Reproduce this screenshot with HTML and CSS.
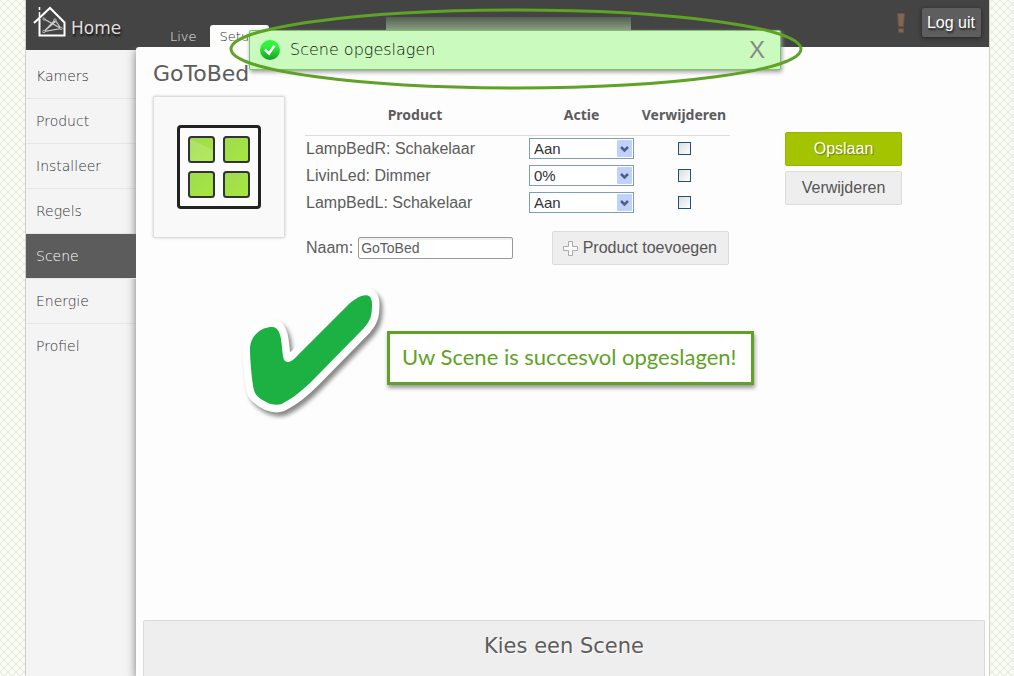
FILE: index.html
```
<!DOCTYPE html>
<html lang="nl">
<head>
<meta charset="utf-8">
<title>Scene - GoToBed</title>
<link rel="stylesheet" href="styles.css">
</head>
<body>
<div class="page">
  <header class="topbar">
    <a class="brand" href="#">
      <svg class="brand-icon" width="34" height="32" viewBox="0 0 34 32" fill="none" stroke="#fff" aria-hidden="true">
        <path d="M1 17 17 2 32 17M6.500 13V29.500H31.500V15.500" stroke-width="2"/>
        <path d="M6.500 1V4M6.500 6V11" stroke-width="1.500"/>
        <path d="M11 13 28 22.500 11 25.500 22 14 28 22.500M11 25.500 23 15" stroke="#ccc" stroke-width="1.200"/>
        <g fill="#444" stroke="#ccc" stroke-width=".8"><circle cx="11" cy="13" r="1.200"/><circle cx="22" cy="14" r="1.200"/><circle cx="11" cy="25.500" r="1.200"/><circle cx="28" cy="22.500" r="1.200"/></g>
      </svg>
      <span>Home</span>
    </a>
    <nav class="tabs">
      <a class="tab" href="#">Live</a>
      <a class="tab tab-active" href="#">Setup</a>
    </nav>
    <div class="session">
      <svg width="8" height="20" viewBox="0 0 8 20" fill="#806656" stroke="#6c503f" role="img" aria-label="Waarschuwing"><path d="M.5.5H7.500L6.500 13.500H1.500ZM1.500 15.500H6.500V19.500H1.500Z"/></svg>
      <button class="logout" type="button">Log uit</button>
    </div>
    <div class="status-glow"></div>
  </header>

  <div class="body">
    <nav class="sidebar">
      <a href="#">Kamers</a>
      <a href="#">Product</a>
      <a href="#">Installeer</a>
      <a href="#">Regels</a>
      <a class="current" href="#">Scene</a>
      <a href="#">Energie</a>
      <a class="last" href="#">Profiel</a>
    </nav>

    <main class="content">
      <h1>GoToBed</h1>
      <div class="editor">
        <div class="scene-card">
          <svg width="84" height="84" viewBox="0 0 84 84" aria-hidden="true">
            <defs><linearGradient id="leaf" x2="1" y2="1"><stop offset="0" stop-color="#a0da55"/><stop offset="1" stop-color="#a5e83a"/></linearGradient></defs>
            <rect x="1.500" y="1.500" width="81" height="81" rx="2.500" fill="#fbfbfb" stroke="#222" stroke-width="3"/>
            <g fill="url(#leaf)" stroke="#333" stroke-width="2">
              <rect x="12" y="12" width="25" height="25" rx="2.500"/><rect x="47" y="12" width="25" height="25" rx="2.500"/>
              <rect x="12" y="47" width="25" height="25" rx="2.500"/><rect x="47" y="47" width="25" height="25" rx="2.500"/>
            </g>
            <path d="M13.500 14 36 25V36H13.500Z" fill="#fff" opacity=".15"/>
          </svg>
        </div>

        <form class="scene-form">
          <table class="products">
            <thead><tr><th>Product</th><th class="col-action">Actie</th><th class="col-remove">Verwijderen</th></tr></thead>
            <tbody>
              <tr><td>LampBedR: Schakelaar</td><td class="mid"><select aria-label="Actie LampBedR"><option>Aan</option><option>Uit</option></select></td><td class="mid"><input type="checkbox" aria-label="Verwijder LampBedR"></td></tr>
              <tr><td>LivinLed: Dimmer</td><td class="mid"><select aria-label="Actie LivinLed"><option>0%</option><option>100%</option></select></td><td class="mid"><input type="checkbox" aria-label="Verwijder LivinLed"></td></tr>
              <tr><td>LampBedL: Schakelaar</td><td class="mid"><select aria-label="Actie LampBedL"><option>Aan</option><option>Uit</option></select></td><td class="mid"><input type="checkbox" aria-label="Verwijder LampBedL"></td></tr>
            </tbody>
          </table>
          <div class="name-row">
            <label for="naam">Naam:</label>
            <input class="name" id="naam" type="text" value="GoToBed">
            <button class="btn add" type="button">
              <svg width="15" height="15" viewBox="0 0 15 15" fill="#fafafa" stroke="#aaa" aria-hidden="true"><path d="M5.500.5H9.500V5.500H14.500V9.500H9.500V14.500H5.500V9.500H.5V5.500H5.500Z"/></svg>
              <span>Product toevoegen</span>
            </button>
          </div>
        </form>

        <div class="actions">
          <button class="btn save" type="button">Opslaan</button>
          <button class="btn" type="button">Verwijderen</button>
        </div>
      </div>

      <div class="result">
        <svg class="result-check" width="144" height="140" viewBox="0 0 144 140" aria-hidden="true">
          <path d="M7 58C7 45 18 36 29 36C42 36 37 65 42 70C47 73 51 68 55 64L104 15C114 5 129 -2 129 13C129 24 128 29 121 37L70 89C60 99 50 107 42 111C37 115 30 114 25 112C19 109 12 105 11 99C9 91 7 69 7 58Z" fill="#1cb142" stroke="#fff" stroke-width="15" stroke-linejoin="round" paint-order="stroke"/>
        </svg>
        <p class="result-text">Uw Scene is succesvol opgeslagen!</p>
      </div>

      <section class="picker"><h2>Kies een Scene</h2></section>
    </main>
  </div>

  <div class="alert" role="status">
    <svg width="20" height="20" viewBox="0 0 20 20" aria-hidden="true">
      <defs><linearGradient id="ok" x2="0" y2="1"><stop offset=".3" stop-color="#2df53a"/><stop offset="1" stop-color="#179c26"/></linearGradient></defs>
      <circle cx="10" cy="10" r="10" fill="url(#ok)"/><path d="M5 9.500 9 13.500 14.500 5.500" fill="none" stroke="#fff" stroke-width="2.500"/>
    </svg>
    <span class="alert-text">Scene opgeslagen</span>
    <button class="close" type="button" aria-label="Sluiten">X</button>
  </div>
  <svg class="ring" width="574" height="82" viewBox="0 0 574 82" aria-hidden="true"><ellipse cx="287" cy="41" rx="285" ry="39" fill="none" stroke="#5fa226" stroke-width="3"/></svg>
</div>
</body>
</html>
```
FILE: styles.css
```
* { box-sizing: border-box; }

body {
  margin: 0;
  color: #5c5c5c;
  font: 16px/20px "Liberation Sans", sans-serif;
  background: #f9fbf3 url("data:image/svg+xml,%3Csvg xmlns='http://www.w3.org/2000/svg' width='8' height='8'%3E%3Cpath d='M0 0 8 8M8 0 0 8' stroke='%23dde5d5' stroke-width='.8'/%3E%3C/svg%3E");
}

a { color: inherit; text-decoration: none; }
button, input, select { font: inherit; color: inherit; }

.page {
  position: relative;
  display: flex;
  flex-direction: column;
  min-height: 100vh;
  margin: 0 24px 0 25px;
  border: solid #d0d0d0;
  border-width: 0 1px;
  background: #f4f4f4;
}

.topbar {
  position: relative;
  display: flex;
  height: 50px;
  background: #444;
  color: #eee;
}

.brand {
  display: flex;
  width: 133px;
  gap: 4px;
  padding: 6px 0 0 7px;
  color: #ddd;
  font: 17px/20px "DejaVu Sans", sans-serif;
  text-shadow: 1px 2px 2px #111;
}
.brand span { padding-top: 12px; }
.brand-icon { flex: none; }

.tabs {
  display: flex;
  align-items: flex-start;
  padding-top: 25px;
  font: 200 13px/23px "DejaVu Sans Light", "DejaVu Sans", sans-serif;
}
.tab { height: 25px; padding: 0 13px 0 11px; }
.tab-active {
  width: 59px;
  padding: 0 10px;
  border-radius: 3px 3px 0 0;
  background: #fdfdfd;
  color: #333;
}

.session {
  display: flex;
  align-items: flex-start;
  gap: 17px;
  margin-left: auto;
  padding: 8px 8px 0 0;
}
.session svg { margin-top: 5px; }
.logout {
  height: 29px;
  padding: 0 6px 0 5px;
  border: 0;
  border-radius: 2px;
  background: #5e5e5e;
  box-shadow: 0 1px 4px #222;
  color: #fff;
  text-shadow: 1px 2px 2px #222;
}

.status-glow {
  position: absolute;
  top: 17px;
  left: 360px;
  width: 245px;
  height: 20px;
  background: linear-gradient(#536050, #a6bf9c);
}

.body {
  display: grid;
  flex: 1;
  grid-template-columns: 110px 1fr;
}

.sidebar {
  display: flex;
  flex-direction: column;
  padding-top: 4px;
  color: #333;
  font: 200 14px/44px "DejaVu Sans Light", "DejaVu Sans", sans-serif;
}
.sidebar a {
  height: 45px;
  padding-left: 10px;
  border-bottom: 1px solid #e6e6e6;
}
.sidebar .current {
  z-index: 2;
  background: #5c5c5c;
  color: #fff;
}
.sidebar .last { border: 0; }

.content {
  z-index: 1;
  display: flex;
  flex-direction: column;
  margin-top: -3px;
  border-radius: 3px 0 0 0;
  background: #fdfdfd;
  box-shadow: 0 3px 10px #777;
  clip-path: inset(0 0 0 -12px);
}

h1, h2 {
  margin: 0;
  font: 22px/26px "DejaVu Sans", sans-serif;
}
h1 { padding: 14px 0 0 17px; }
h2 { font-size: 21px; }

.editor {
  display: flex;
  align-items: flex-start;
  padding: 9px 17px 0;
}

.scene-card {
  display: flex;
  flex: none;
  align-items: center;
  justify-content: center;
  width: 132px;
  height: 142px;
  border: 1px solid #ddd;
  border-radius: 2px;
  background: #f9f9f9;
  box-shadow: 0 0 3px #ccc;
}

.scene-form { margin-left: 20px; }

.products {
  width: 425px;
  border-collapse: collapse;
  table-layout: fixed;
}
.products th {
  height: 39px;
  padding: 0;
  border-bottom: 1px solid #dcdcdc;
  font: bold 14px/20px "Noto Sans", sans-serif;
}
.products .col-action { width: 113px; }
.products .col-remove { width: 92px; }
.products td { height: 27px; padding: 0 1px; }
.products .mid { text-align: center; }

select {
  display: block;
  width: 105px;
  height: 21px;
  margin: 0 auto;
  padding: 0 4px;
  border: 1px solid #7f9db9;
  border-radius: 0;
  appearance: none;
  color: #333;
  font-size: 15px;
  background: #fff url("data:image/svg+xml,%3Csvg xmlns='http://www.w3.org/2000/svg' width='15' height='17'%3E%3Crect width='15' height='17' rx='1' fill='%23c0d1fb'/%3E%3Cpath d='m4 7 3.500 3.500L11 7' fill='none' stroke='%234d6185' stroke-width='2.500'/%3E%3C/svg%3E") no-repeat right 1px center;
}

input[type="checkbox"] {
  display: block;
  width: 13px;
  height: 13px;
  margin: 0 auto;
  border: 1px solid #1c5180;
  appearance: none;
  background: linear-gradient(135deg, #dcdcd7, #fff);
}

.name-row {
  display: flex;
  align-items: center;
  margin-top: 15px;
  padding: 0 1px;
}
.name {
  width: 155px;
  height: 22px;
  margin-left: 5px;
  padding: 0 2px;
  border: 1px solid #999;
  border-radius: 2px;
  background: #fff;
  box-shadow: inset 0 2px 1px #eee;
  font-size: 14px;
}

.btn {
  height: 34px;
  padding: 0;
  border: 1px solid #dcdcdc;
  border-radius: 2px;
  background: #eee;
  color: #555;
}
.add {
  display: flex;
  align-items: center;
  gap: 5px;
  margin-left: auto;
  padding: 0 11px 0 10px;
}

.actions {
  display: flex;
  flex-direction: column;
  gap: 5px;
  width: 117px;
  margin: 36px 0 0 55px;
}
.save {
  border-color: #9bb200;
  background: #a4c400;
  color: #fff;
  text-shadow: 1px 1px 1px #687c00;
}

.result {
  display: flex;
  align-items: flex-start;
  padding: 26px 0 0 107px;
}
.result-check {
  flex: none;
  overflow: visible;
  filter: drop-shadow(3px 4px 2px #888);
}
.result-text {
  margin: 40px 0 0;
  padding: 9px 15px 11px 12px;
  border: 3px solid #5fa226;
  background: #fff;
  box-shadow: 1px 3px 4px #999;
  color: #5fa226;
  font: 22px/28px Lato, sans-serif;
}

.picker {
  height: 56px;
  margin: auto 4px 0 7px;
  padding-top: 12px;
  border: solid #dadada;
  border-width: 1px 1px 0;
  border-radius: 2px 2px 0 0;
  background: #eee;
  text-align: center;
  text-shadow: 1px 1px 0 #fff;
}

.alert {
  position: absolute;
  z-index: 3;
  top: 30px;
  left: 223px;
  display: flex;
  align-items: center;
  width: 532px;
  height: 40px;
  padding: 0 15px 0 10px;
  border: 1px solid #79c267;
  border-radius: 2px;
  background: #cafabe;
  box-shadow: 1px 2px 4px #999;
  color: #111;
}
.alert-text {
  margin-left: 10px;
  font: 200 16px/20px "DejaVu Sans Light", "DejaVu Sans", sans-serif;
}
.close {
  margin-left: auto;
  padding: 0;
  border: 0;
  background: none;
  color: #888;
  font-size: 24px;
  line-height: 28px;
}

.ring {
  position: absolute;
  z-index: 4;
  top: 8px;
  left: 203px;
  pointer-events: none;
}
```
